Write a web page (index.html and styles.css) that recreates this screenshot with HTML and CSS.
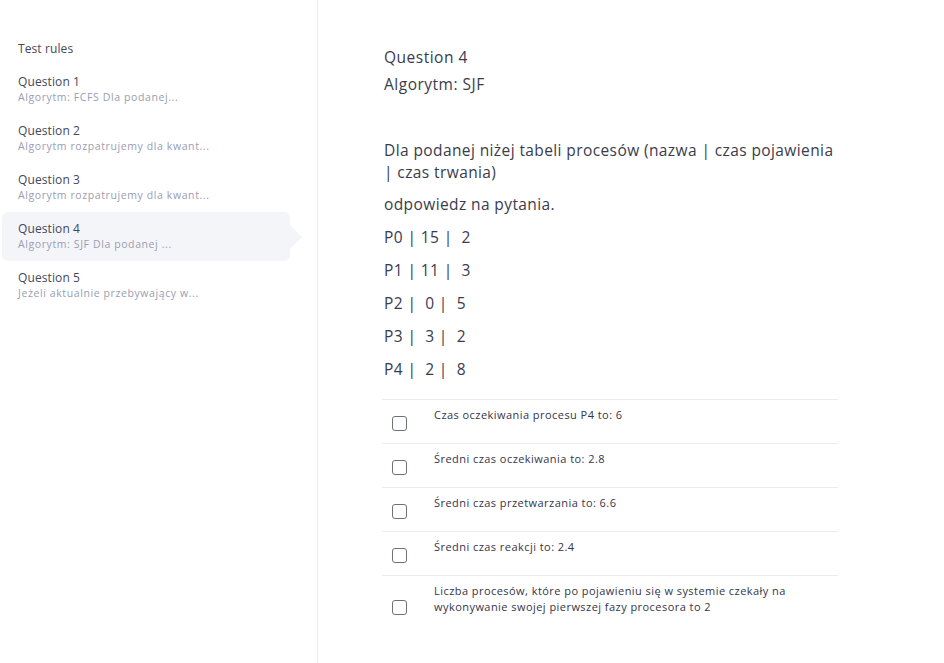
FILE: index.html
```html
<!DOCTYPE html>
<html lang="pl">
<head>
<meta charset="utf-8">
<title>Question 4</title>
<link rel="stylesheet" href="styles.css">
</head>
<body>
<div class="layout">
  <aside class="sidebar">
    <div class="nav-item">
      <div class="nav-title">Test rules</div>
    </div>
    <div class="nav-item">
      <div class="nav-title">Question 1</div>
      <div class="nav-sub">Algorytm: FCFS Dla podanej...</div>
    </div>
    <div class="nav-item">
      <div class="nav-title">Question 2</div>
      <div class="nav-sub">Algorytm rozpatrujemy dla kwant...</div>
    </div>
    <div class="nav-item">
      <div class="nav-title">Question 3</div>
      <div class="nav-sub">Algorytm rozpatrujemy dla kwant...</div>
    </div>
    <div class="nav-item active">
      <div class="nav-title">Question 4</div>
      <div class="nav-sub">Algorytm: SJF Dla podanej ...</div>
    </div>
    <div class="nav-item">
      <div class="nav-title">Question 5</div>
      <div class="nav-sub">Jeżeli aktualnie przebywający w...</div>
    </div>
  </aside>
  <main class="content">
    <div class="q-head">
      <div class="q-line">Question 4</div>
      <div class="q-line">Algorytm: SJF</div>
    </div>
    <div class="q-body">
      <p class="lead">Dla podanej niżej tabeli procesów (nazwa | czas pojawienia | czas trwania)</p>
      <p>odpowiedz na pytania.</p>
      <p>P0 | 15 |&nbsp; 2</p>
      <p>P1 | 11 |&nbsp; 3</p>
      <p>P2 |&nbsp; 0 |&nbsp; 5</p>
      <p>P3 |&nbsp; 3 |&nbsp; 2</p>
      <p>P4 |&nbsp; 2 |&nbsp; 8</p>
    </div>
    <div class="options">
      <label class="option"><span class="box"></span><span class="opt-text">Czas oczekiwania procesu P4 to: 6</span></label>
      <label class="option"><span class="box"></span><span class="opt-text">Średni czas oczekiwania to: 2.8</span></label>
      <label class="option"><span class="box"></span><span class="opt-text">Średni czas przetwarzania to: 6.6</span></label>
      <label class="option"><span class="box"></span><span class="opt-text">Średni czas reakcji to: 2.4</span></label>
      <label class="option"><span class="box"></span><span class="opt-text">Liczba procesów, które po pojawieniu się w systemie czekały na wykonywanie swojej pierwszej fazy procesora to 2</span></label>
    </div>
  </main>
</div>
</body>
</html>
```
FILE: styles.css
```css
* { box-sizing: border-box; }
html, body { margin: 0; padding: 0; background: #fff; }
body {
  font-family: "Open Sans", "Noto Sans", sans-serif;
  color: #3d3f4f;
}
.layout {
  display: flex;
  min-height: 663px;
}
.sidebar {
  width: 318px;
  flex: 0 0 318px;
  border-right: 1px solid #ebebef;
  padding-top: 32px;
}
.nav-item {
  position: relative;
  margin-left: 2px;
  width: 288px;
  padding: 8px 16px 8px 16px;
  border-radius: 6px;
}
.nav-item + .nav-item { padding-bottom: 9px; }
.nav-title {
  font-size: 12px;
  line-height: 17px;
  color: #45475a;
  letter-spacing: 0.1px;
}
.nav-sub {
  font-size: 10.5px;
  line-height: 15px;
  color: #9a9db2;
  letter-spacing: 0.6px;
}
.nav-item.active { background: #f4f5f9; }
.nav-item.active::after {
  content: "";
  position: absolute;
  right: -12px;
  top: 50%;
  margin-top: -12px;
  border-top: 12px solid transparent;
  border-bottom: 12px solid transparent;
  border-left: 12px solid #f4f5f9;
}
.content {
  flex: 1;
  padding: 44px 0 0 66px;
}
.q-head { margin-bottom: 41px; }
.q-line {
  font-size: 15.5px;
  line-height: 27px;
  color: #3a3c4d;
  letter-spacing: 0.5px;
}
.q-body { width: 460px; }
.q-body p {
  margin: 0 0 11px;
  font-size: 15.5px;
  line-height: 22px;
  color: #3a3c4d;
  letter-spacing: 0.4px;
}
.q-body p.lead { margin-bottom: 10px; }
.options {
  width: 456px;
  margin-left: -2px;
  margin-top: 19px;
}
.option {
  display: flex;
  align-items: center;
  border-top: 1px solid #ececf0;
  padding: 7px 0 8px 10px;
}
.box {
  flex: 0 0 15px;
  width: 15px;
  height: 15px;
  margin-top: 4px;
  border: 1.5px solid #6d6f82;
  border-radius: 3px;
  background: #fff;
}
.opt-text {
  margin-left: 27px;
  margin-bottom: 12px;
  font-size: 11px;
  line-height: 16px;
  color: #34354a;
  letter-spacing: 0.45px;
  max-width: 390px;
}
```
